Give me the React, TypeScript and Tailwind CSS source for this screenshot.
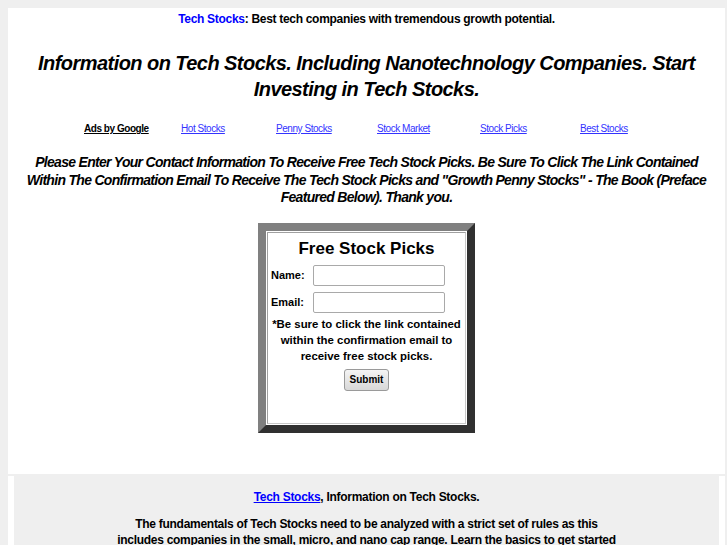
import React from "react";

export default function App() {
  return (
    <div className="min-h-[545px] bg-[#efefef] pt-2 pl-2 pr-[2px] font-['Liberation_Sans',Arial,sans-serif] text-black">
      <div className="bg-white h-[466px] flex flex-col items-center">
        <div className="mt-[3px] text-[12px] font-bold leading-[16px] tracking-[-0.3px]">
          <span className="text-[#0000ff]">Tech Stocks</span>: Best tech companies with tremendous growth potential.
        </div>
        <h1 className="mt-[23px] w-[690px] text-center text-[20px] font-bold italic leading-[26px] tracking-[-0.55px]">
          Information on Tech Stocks. Including Nanotechnology Companies. Start Investing in Tech Stocks.
        </h1>
        <div className="mt-[20px] w-full pl-[76px] flex items-center text-[10px] leading-[14px] tracking-[-0.45px]">
          <span className="w-[97px] font-bold underline text-black">Ads by Google</span>
          <span className="w-[95px] text-[#3333ff] underline">Hot Stocks</span>
          <span className="w-[101px] text-[#3333ff] underline">Penny Stocks</span>
          <span className="w-[103px] text-[#3333ff] underline">Stock Market</span>
          <span className="w-[100px] text-[#3333ff] underline">Stock Picks</span>
          <span className="w-[60px] text-[#3333ff] underline">Best Stocks</span>
        </div>
        <p className="mt-[18px] w-[690px] text-center text-[14px] font-bold italic leading-[17.5px] tracking-[-0.7px]">
          Please Enter Your Contact Information To Receive Free Tech Stock Picks. Be Sure To Click The Link Contained Within The Confirmation Email To Receive The Tech Stock Picks and "Growth Penny Stocks" - The Book (Preface Featured Below). Thank you.
        </p>
        <div className="mt-[16px] w-[217px] h-[210px] border-[8px] border-t-[#808080] border-l-[#808080] border-b-[#303030] border-r-[#303030] bg-white p-px">
          <div className="h-full border border-t-[#a0a0a0] border-l-[#a0a0a0] border-b-[#c8c8c8] border-r-[#c8c8c8] flex flex-col items-center">
            <div className="mt-[6px] text-[17px] font-bold leading-[20px]">Free Stock Picks</div>
            <div className="mt-[6px] w-full pl-[3px] flex items-center text-[11px] font-bold">
              <span className="w-[42px]">Name:</span>
              <div className="w-[132px] h-[21px] border border-[#a9a9a9] rounded-[2px] bg-white" />
            </div>
            <div className="mt-[6px] w-full pl-[3px] flex items-center text-[11px] font-bold">
              <span className="w-[42px]">Email:</span>
              <div className="w-[132px] h-[21px] border border-[#a9a9a9] rounded-[2px] bg-white" />
            </div>
            <div className="mt-[3px] text-center text-[11.4px] font-bold leading-[16px] w-full">
              *Be sure to click the link contained<br />within the confirmation email to<br />receive free stock picks.
            </div>
            <div className="mt-[5px] w-[45px] h-[22px] rounded-[3px] border border-[#9a9a9a] bg-gradient-to-b from-[#f4f4f4] to-[#d8d8d8] flex items-center justify-center text-[10px] font-bold">
              Submit
            </div>
          </div>
        </div>
      </div>
      <div className="mt-[2px] bg-white px-[6px] h-[70px]">
        <div className="bg-[#efefef] h-full flex flex-col items-center pt-[13px] text-[12px] font-bold leading-[16px] tracking-[-0.28px]">
          <div>
            <span className="text-[#0000ff] underline">Tech Stocks</span>, Information on Tech Stocks.
          </div>
          <p className="mt-[11px] w-[500px] text-center">
            The fundamentals of Tech Stocks need to be analyzed with a strict set of rules as this includes companies in the small, micro, and nano cap range. Learn the basics to get started
          </p>
        </div>
      </div>
    </div>
  );
}
